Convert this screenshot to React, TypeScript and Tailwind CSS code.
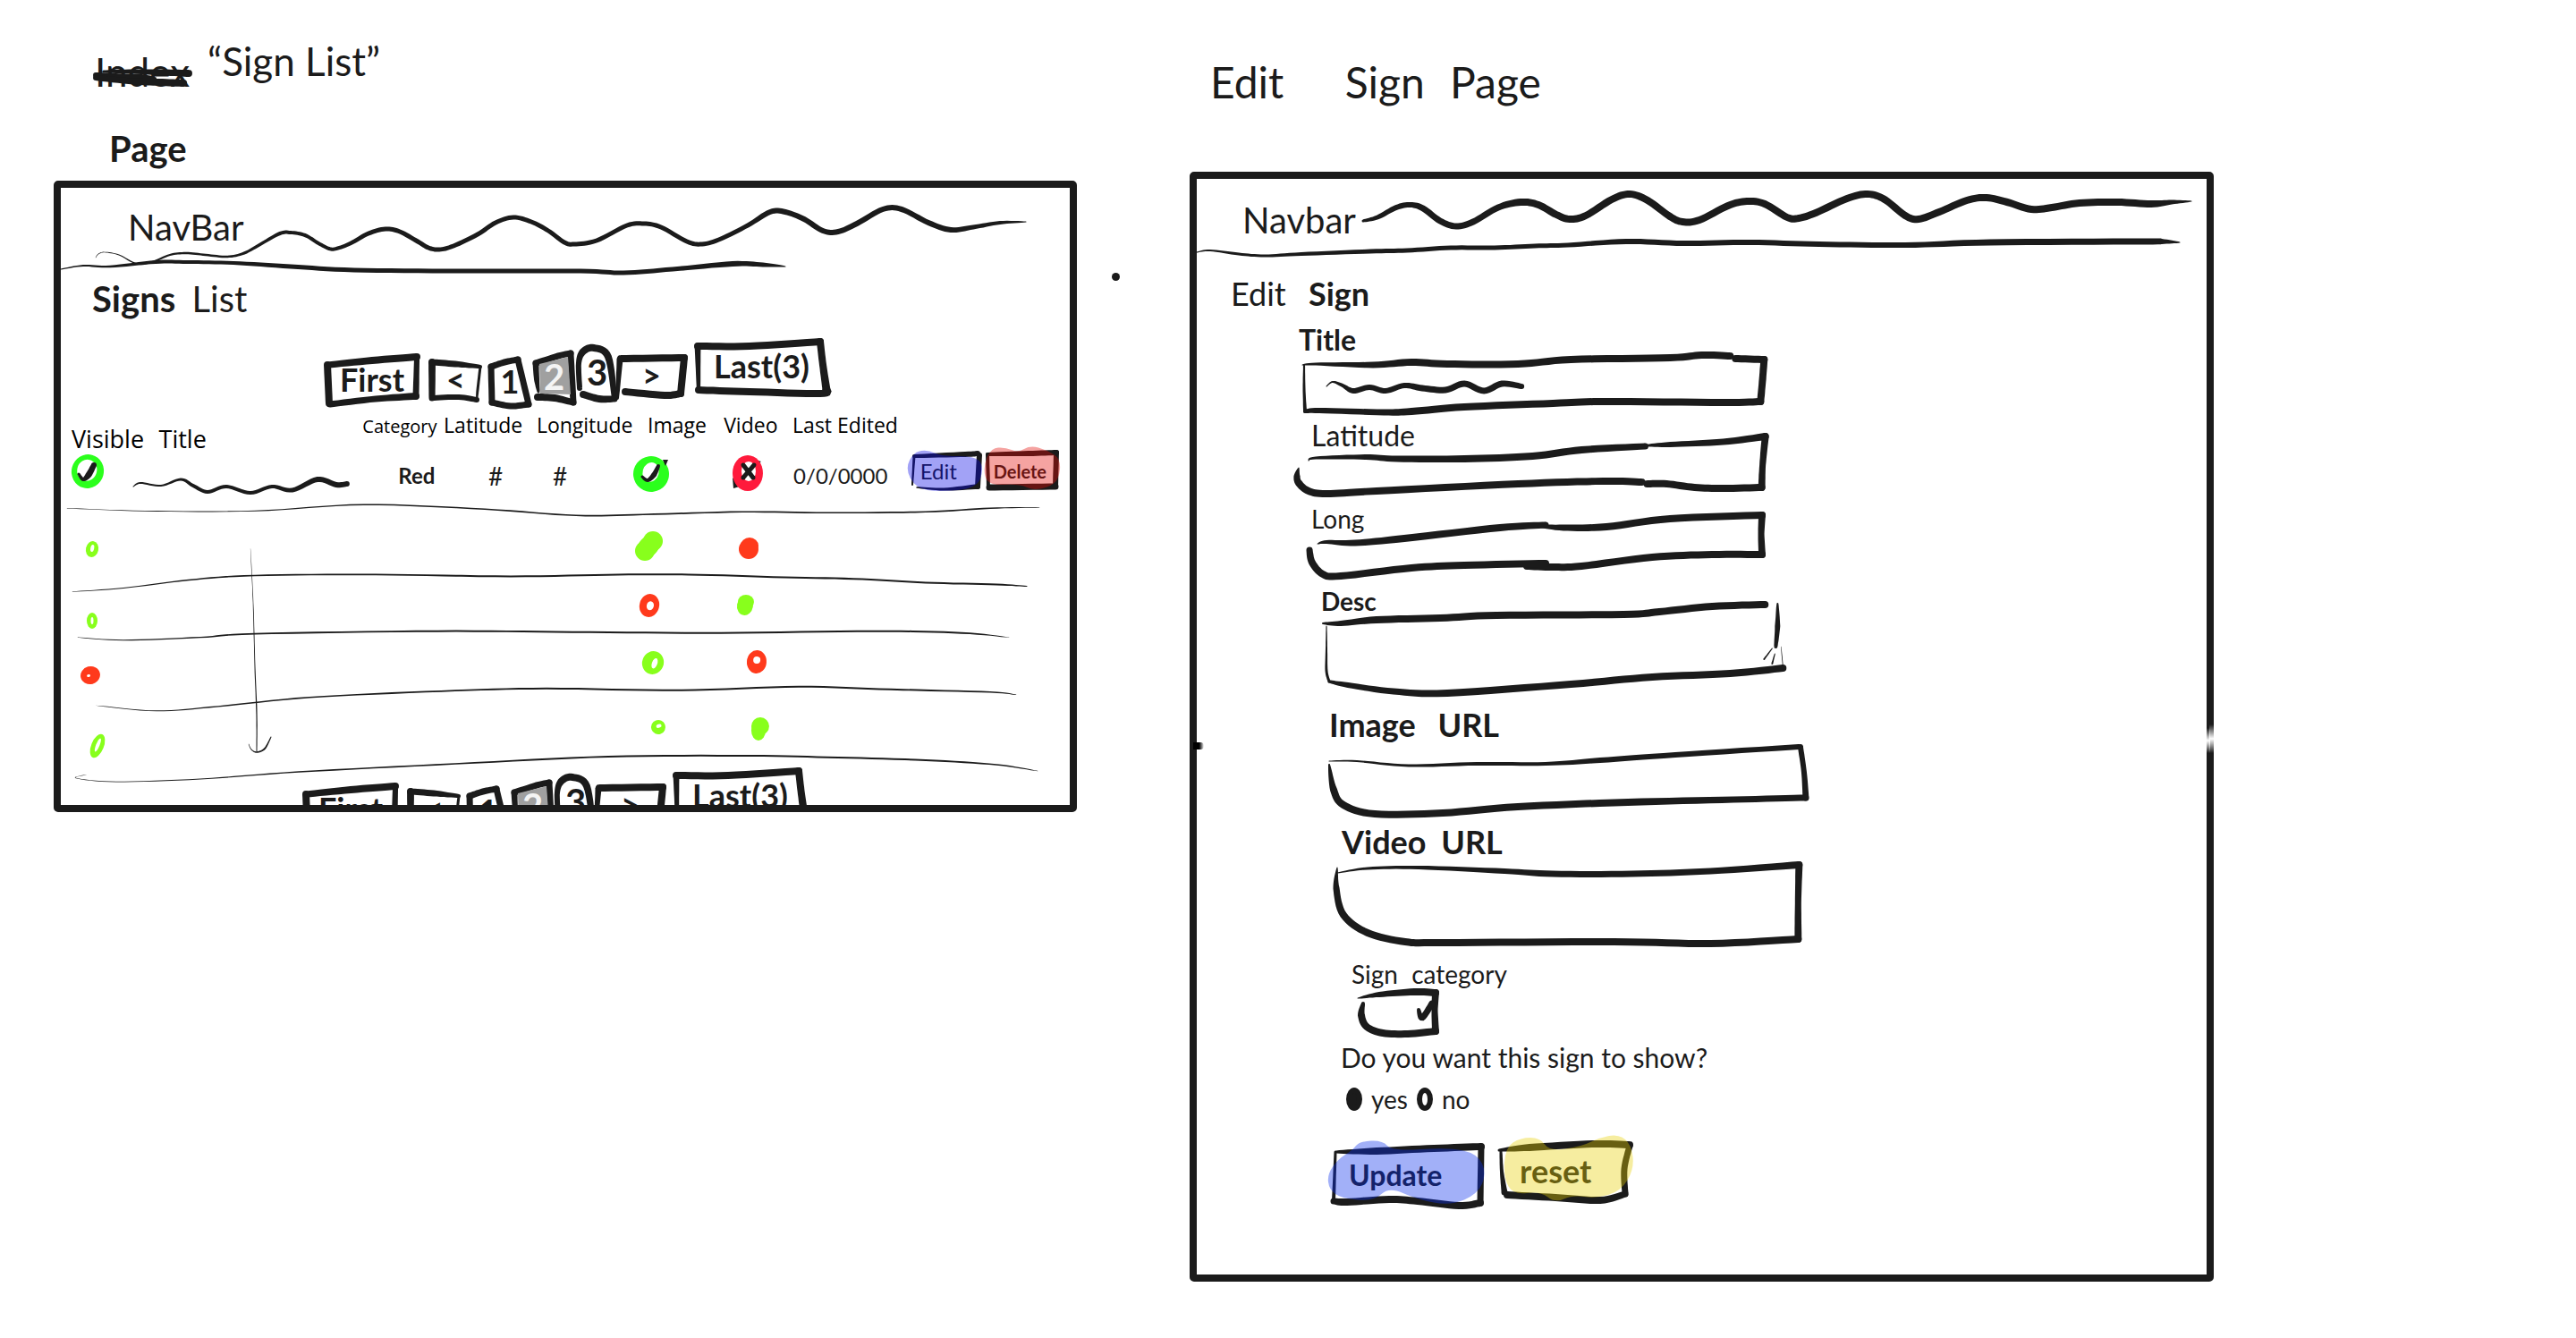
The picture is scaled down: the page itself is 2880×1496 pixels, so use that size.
import React from "react";

const INK = "#1b1b1b";

type Point = [number, number, number];

/* Builds the outline of a pen stroke whose points are written "x,y,width". */
function penPath(source: string, extra: number): string {
  const pts = source
    .trim()
    .split(/\s+/)
    .map((p) => p.split(",").map(Number) as Point)
    .map(([x, y, w]) => [x, y, w >= 5 ? w + extra : w] as Point);
  const samples: Point[] = [];
  for (let i = 0; i < pts.length - 1; i++) {
    const a = pts[Math.max(i - 1, 0)];
    const b = pts[i];
    const c = pts[i + 1];
    const d = pts[Math.min(i + 2, pts.length - 1)];
    for (let s = 0; s < 8; s++) {
      const t = s / 8;
      const at = (k: 0 | 1) =>
        0.5 *
        (2 * b[k] +
          (c[k] - a[k]) * t +
          (2 * a[k] - 5 * b[k] + 4 * c[k] - d[k]) * t * t +
          (3 * b[k] - a[k] - 3 * c[k] + d[k]) * t * t * t);
      samples.push([at(0), at(1), b[2] + (c[2] - b[2]) * t]);
    }
  }
  samples.push(pts[pts.length - 1]);
  const left: string[] = [];
  const right: string[] = [];
  samples.forEach((p, i) => {
    const q = samples[Math.max(i - 1, 0)];
    const r = samples[Math.min(i + 1, samples.length - 1)];
    const dx = r[0] - q[0];
    const dy = r[1] - q[1];
    const len = Math.hypot(dx, dy) || 1;
    const nx = ((-dy / len) * p[2]) / 2;
    const ny = ((dx / len) * p[2]) / 2;
    left.push(`${(p[0] + nx).toFixed(1)} ${(p[1] + ny).toFixed(1)}`);
    right.unshift(`${(p[0] - nx).toFixed(1)} ${(p[1] - ny).toFixed(1)}`);
  });
  const cap = (p: Point) => {
    const r = p[2] / 2;
    return `M${p[0] - r} ${p[1]}a${r} ${r} 0 1 0 ${p[2]} 0a${r} ${r} 0 1 0 ${-p[2]} 0Z`;
  };
  return `M${left.join("L")}L${right.join("L")}Z${cap(pts[0])}${cap(pts[pts.length - 1])}`;
}

function Pen({ pts, extra = 0 }: { pts: string; extra?: number }) {
  return <path d={penPath(pts, extra)} fill={INK} fillRule="nonzero" />;
}

/* Smooth closed highlighter patch. */
function Marker({ pts, color }: { pts: string; color: string }) {
  const p = pts.split(" ").map((s) => s.split(",").map(Number));
  const mid = (a: number[], b: number[]) => `${(a[0] + b[0]) / 2} ${(a[1] + b[1]) / 2}`;
  const d = p.map((c, i) => `Q${c[0]} ${c[1]} ${mid(c, p[(i + 1) % p.length])}`).join("");
  return <path d={`M${mid(p[p.length - 1], p[0])}${d}Z`} fill={color} />;
}

function Sketch({
  box,
  strokes = [],
  extra = 0,
  children,
}: {
  box: string;
  strokes?: string[];
  extra?: number;
  children?: React.ReactNode;
}) {
  return (
    <svg
      aria-hidden="true"
      viewBox={box}
      preserveAspectRatio="none"
      className="pointer-events-none absolute inset-0 h-full w-full overflow-visible"
    >
      {strokes.map((s) => (
        <Pen key={s} pts={s} extra={extra} />
      ))}
      {children}
    </svg>
  );
}

const pages = [
  {
    label: "First",
    box: "362 397 108 58",
    cls: "mt-[18px] h-[58px] w-[108px] text-[36px]",
    strokes: [
      "367,408,6 416,403,7 466,399,7",
      "466,400,5 465,443,6",
      "465,443,7 420,446,6 369,452,6",
      "366,408,7 368,451,7",
    ],
  },
  {
    label: "<",
    box: "480 402 59 48",
    cls: "mt-[23px] ml-[10px] h-[48px] w-[59px] text-[36px]",
    strokes: [
      "483,405,7 483,445,6",
      "483,405,6 509,407,6 537,410,4",
      "537,410,3 534,436,3 533,448,2",
      "483,445,5 513,444,5 533,447,5",
    ],
  },
  {
    label: "1",
    box: "546 400 48 56",
    cls: "mt-[21px] ml-[7px] h-[56px] w-[48px] text-[36px]",
    strokes: [
      "549,410,6 550,450,6",
      "549,410,6 564,405,6 579,402,6",
      "579,402,6 591,452,6",
      "550,450,6 571,454,6 591,452,6",
    ],
  },
  {
    label: "2",
    box: "596 393 47 59",
    cls: "mt-[14px] ml-[2px] h-[59px] w-[47px] text-[40px] text-[#f4f4f4]",
    current: true,
    strokes: [
      "599,406,6 600,424,5 602,438,3",
      "599,406,6 624,398,6 638,395,6",
      "638,395,6 641,450,6",
      "641,450,6 620,445,7 601,444,7",
    ],
  },
  {
    label: "3",
    box: "644 387 47 61",
    cls: "mt-[8px] ml-px h-[61px] w-[47px] text-[40px]",
    strokes: [
      "648,434,5 647,406,5 652,393,7 664,389,7 680,399,7 687,445,5",
      "687,446,6 670,446,7 652,441,7",
    ],
  },
  {
    label: ">",
    box: "690 396 77 49",
    cls: "mt-[17px] -ml-px h-[49px] w-[77px] text-[36px]",
    strokes: ["690,445,4 693,402,6", "694,401,7 765,400,7", "765,400,7 761,440,7", "761,440,7 743,442,7 699,438,7"],
  },
  {
    label: "Last(3)",
    box: "776 379 151 64",
    cls: "ml-[9px] h-[64px] w-[151px] text-[36px]",
    strokes: [
      "780,387,7 838,387,7 917,382,7",
      "917,382,7 920,408,7 924,436,8",
      "924,436,8 917,440,7 838,438,7 781,436,7",
      "780,387,6 781,436,4",
    ],
  },
];

function Pagination({ className, label }: { className: string; label: string }) {
  return (
    <nav aria-label={label} className={`flex h-[78px] items-start font-bold ${className}`}>
      {pages.map((p) => (
        <button
          key={p.label}
          type="button"
          aria-current={p.current ? "page" : undefined}
          className={`relative flex shrink-0 items-center justify-center pb-1 leading-none ${p.cls}`}
        >
          <Sketch box={p.box} strokes={p.strokes} extra={1}>
            {p.current && <path d="M603 407L635 399L638 441L604 440Z" fill="#a0a0a0" />}
          </Sketch>
          <span className="relative">{p.label}</span>
        </button>
      ))}
    </nav>
  );
}

const LIME = "#88ff1c";
const RED = "#ff3a1c";

type Mark = { cx: number; cy: number; rx: number; ry: number; fill: string; tilt?: number; hole?: [number, number, number, number] };

function Status({ x, w, y, marks, label, children }: { x: number; w: number; y: number; marks: Mark[]; label: string; children?: React.ReactNode }) {
  return (
    <svg
      role="img"
      aria-label={label}
      viewBox={`${x} ${y} ${w} 60`}
      preserveAspectRatio="xMinYMid"
      className="block h-[60px] w-full overflow-visible"
    >
      {marks.map((m, i) => (
        <g key={i} transform={`rotate(${m.tilt ?? 0} ${m.cx} ${m.cy})`}>
          <ellipse cx={m.cx} cy={m.cy} rx={m.rx} ry={m.ry} fill={m.fill} />
          {m.hole && <ellipse cx={m.hole[0]} cy={m.hole[1]} rx={m.hole[2]} ry={m.hole[3]} fill="#fff" />}
        </g>
      ))}
      {children}
    </svg>
  );
}

const VIS = { x: 68, w: 101 };
const IMG = { x: 720, w: 81 };
const VID = { x: 801, w: 79 };

const rows: { h: string; y: number; vis: Mark; img: Mark[]; vid: Mark[]; on: [boolean, boolean, boolean] }[] = [
  {
    h: "h-[75px]",
    y: 577,
    on: [true, true, false],
    vis: { cx: 103, cy: 612, rx: 7, ry: 9, fill: LIME, tilt: 12, hole: [103, 611, 2, 4] },
    img: [
      { cx: 721, cy: 614, rx: 11, ry: 11, fill: LIME },
      { cx: 725, cy: 609, rx: 11, ry: 15, fill: LIME, tilt: 42 },
      { cx: 730, cy: 603, rx: 11, ry: 11, fill: LIME },
    ],
    vid: [
      { cx: 838, cy: 608, rx: 10, ry: 9, fill: RED },
      { cx: 837, cy: 612, rx: 11, ry: 11, fill: RED },
    ],
  },
  {
    h: "h-[63px]",
    y: 646,
    on: [true, false, true],
    vis: { cx: 103, cy: 692, rx: 6, ry: 9, fill: LIME, hole: [103, 692, 1.5, 4] },
    img: [{ cx: 726, cy: 675, rx: 11, ry: 13, fill: RED, tilt: 15, hole: [727, 675, 4, 5] }],
    vid: [
      { cx: 834, cy: 671, rx: 9, ry: 8, fill: LIME },
      { cx: 833, cy: 675, rx: 9, ry: 11, fill: LIME, tilt: 10 },
    ],
  },
  {
    h: "h-[64px]",
    y: 710,
    on: [false, true, false],
    vis: { cx: 101, cy: 754, rx: 11, ry: 10, fill: RED, tilt: -15, hole: [99, 754, 2, 1.5] },
    img: [{ cx: 730, cy: 740, rx: 12, ry: 13, fill: LIME, tilt: 20, hole: [732, 740, 3, 6] }],
    vid: [{ cx: 846, cy: 739, rx: 11, ry: 13, fill: RED, tilt: 5, hole: [846, 737, 4, 4] }],
  },
  {
    h: "h-[76px]",
    y: 780,
    on: [true, true, true],
    vis: { cx: 109, cy: 833, rx: 7, ry: 14, fill: LIME, tilt: 22, hole: [109, 832, 2, 8] },
    img: [{ cx: 736, cy: 812, rx: 8, ry: 8, fill: LIME, tilt: -20, hole: [737, 811, 3, 2] }],
    vid: [
      { cx: 850, cy: 811, rx: 10, ry: 10, fill: LIME },
      { cx: 848, cy: 816, rx: 8, ry: 11, fill: LIME },
    ],
  },
];

const tableRules = [
  "75,568,0.5 162,571,0.8 285,571,1 407,564,1.5 542,569,1.5 644,576,1.7 719,575,1.7 830,572,1.7 925,573,1.7 1035,572,1.7 1107,568,1.5 1162,567,0.5",
  "81,661,0.5 138,657,1 211,648,1.5 285,643,1.7 420,642,1.8 571,644,2 691,642,2 770,642,2 877,645,2 964,647,2 1035,651,2 1114,653,2 1148,655,1",
  "87,712,0.5 138,715,1 224,712,1.5 285,708,1.7 489,705,2 640,706,2 806,707,2 976,705,2 1075,707,2 1128,712,0.5",
  "108,788,0.5 175,794,1 244,789,1.5 346,779,1.6 493,772,1.8 611,769,2 759,771,2 893,767,2 996,770,2 1107,773,1.7 1136,776,0.5",
  "97,865,0.3 85,869,0.5 130,873,0.8 224,870,1 334,862,1.5 509,853,1.7 680,845,2 838,844,2 937,846,2 1035,849,2 1114,854,1.7 1160,861,0.5",
  "280,613,0.3 283,673,0.7 285,745,1 287,798,1.3 287,839,1",
  "278,831,0.5 281,837,1 287,840,1.5 296,836,2 303,823,1",
];

function SignTable() {
  return (
    <div className="relative mt-[6px]">
      <table className="w-full table-fixed border-collapse text-left">
        <colgroup>
          <col className="w-[9%]" />
          <col className="w-[20.2%]" />
          <col className="w-[8.4%]" />
          <col className="w-[9.2%]" />
          <col className="w-[11%]" />
          <col className="w-[7.2%]" />
          <col className="w-[7%]" />
          <col className="w-[11.4%]" />
          <col />
        </colgroup>
        <thead>
          <tr className="h-[45px] font-['Open_Sans',sans-serif] text-[23px] leading-[24px] whitespace-nowrap text-black [&>th]:p-0 [&>th]:align-top [&>th]:font-normal">
            <th scope="col">
              <span className="block pt-[10px] pl-3 text-[27px] leading-[36px]">Visible</span>
            </th>
            <th scope="col">
              <span className="block pt-[10px] pl-2 text-[27px] leading-[36px]">Title</span>
            </th>
            <th scope="col">
              <span className="pl-2 text-[20px]">Category</span>
            </th>
            <th scope="col">
              <span className="pl-1">Latitude</span>
            </th>
            <th scope="col">
              <span className="pl-1">Longitude</span>
            </th>
            <th scope="col">
              <span className="pl-1">Image</span>
            </th>
            <th scope="col">
              <span className="pl-2">Video</span>
            </th>
            <th scope="col">
              <span className="pl-[6px]">Last Edited</span>
            </th>
            <th scope="col" aria-label="Actions" />
          </tr>
        </thead>
        <tbody className="[&_td]:p-0">
          <tr className="h-[62px] text-[24px] leading-[28px]">
            <td>
              <Status
                {...VIS}
                y={509}
                label="Visible"
                marks={[{ cx: 98, cy: 526, rx: 18, ry: 19, fill: "#2bff1c", tilt: 15, hole: [97, 525, 11, 12] }]}
              >
                <Pen pts="88,529,3 93,535,4 99,530,7 105,519,6" />
              </Status>
            </td>
            <td className="relative">
              <Sketch
                box="169 508 228 62"
                strokes={[
                  "148,543,1 156,539,2 179,542,2 201,535,3 215,542,4 231,549,4 252,543,4 279,550,4 303,543,4 326,547,5 354,535,6 375,541,6 387,540,6",
                ]}
              />
            </td>
            <td>
              <span className="block pb-4 pl-[48px] font-bold">Red</span>
            </td>
            <td>
              <span className="block pb-4 pl-[54px] text-[28px]">#</span>
            </td>
            <td>
              <span className="block pb-4 pl-[22px] text-[28px]">#</span>
            </td>
            <td>
              <Status
                {...IMG}
                y={509}
                label="Has image"
                marks={[{ cx: 728, cy: 529, rx: 20, ry: 20, fill: "#2bff1c", tilt: 15, hole: [727, 527, 9, 11] }]}
              >
                <Pen pts="718,532,3 724,536,4 731,530,6 736,520,4" />
                <path d="M741 513L747 513L744 520Z" fill={INK} />
              </Status>
            </td>
            <td>
              <Status {...VID} y={509} label="No video" marks={[]}>
                <path d="M826 513L833 513L829 518ZM844 513L851 515L846 519ZM819 533L820 545L827 543Z" fill={INK} />
                <ellipse cx="836" cy="528" rx="17" ry="20" fill="#ff1a3c" />
                <ellipse cx="837" cy="526" rx="8" ry="11" fill="#fff" />
                <Pen pts="831,519,5 842,533,5" />
                <Pen pts="843,519,5 831,533,5" />
              </Status>
            </td>
            <td>
              <span className="block pb-4 pl-[7px]">0/0/0000</span>
            </td>
            <td className="align-top">
              <div className="-mt-[5px] flex gap-[5px] pl-[11px]">
                <button type="button" className="relative h-[46px] w-[77px] pl-[9px] text-left text-[24px]">
                  <Sketch
                    box="1020 503 77 46"
                    extra={1}
                    strokes={[
                      "1022,509,4 1079,507,5 1093,506,5",
                      "1095,508,5 1093,543,5",
                      "1093,543,5 1055,546,3 1025,544,1.5",
                      "1022,509,3 1020,541,2",
                    ]}
                  />
                  Edit
                  <Sketch box="1020 503 77 46">
                    <Marker
                      pts="1012,523 1022,504 1038,502 1052,509 1092,509 1100,523 1092,545 1050,549 1024,545"
                      color="rgba(10,10,232,0.38)"
                    />
                  </Sketch>
                </button>
                <button type="button" className="relative h-[46px] w-[81px] pl-[9px] text-left text-[20px] font-bold">
                  <Sketch
                    box="1102 503 81 46"
                    extra={1}
                    strokes={[
                      "1104,507,4 1150,506,5 1181,505,5",
                      "1181,505,5 1180,543,5",
                      "1180,543,6 1106,544,6",
                      "1104,507,4 1105,544,4",
                    ]}
                  />
                  Delete
                  <Sketch box="1102 503 81 46">
                    <Marker
                      pts="1099,521 1108,500 1124,499 1138,505 1152,497 1170,502 1186,512 1184,535 1172,544 1154,547 1140,540 1104,542"
                      color="rgba(228,12,8,0.38)"
                    />
                  </Sketch>
                </button>
              </div>
            </td>
          </tr>
          {rows.map((r) => (
            <tr key={r.y} className={r.h}>
              <td>
                <Status {...VIS} y={r.y} label={r.on[0] ? "Visible" : "Hidden"} marks={[r.vis]} />
              </td>
              <td colSpan={4} />
              <td>
                <Status {...IMG} y={r.y} label={r.on[1] ? "Has image" : "No image"} marks={r.img} />
              </td>
              <td>
                <Status {...VID} y={r.y} label={r.on[2] ? "Has video" : "No video"} marks={r.vid} />
              </td>
              <td colSpan={2} />
            </tr>
          ))}
        </tbody>
      </table>
      <Sketch box="68 463 1128 385" strokes={tableRules} />
    </div>
  );
}

function SignListPage() {
  return (
    <section>
      <header className="h-[202px] pt-[42px]">
        <h1>
          <span className="flex items-start gap-5 pl-[46px] text-[44px] leading-[52px]">
            <s className="relative mt-3 no-underline">
              Index
              <Sketch
                box="106 54 109 52"
                strokes={[
                  "116,80,3 150,80,5 185,81,7 214,82,8",
                  "107,84,6 130,86,8 160,87,8 175,88,4",
                  "107,87,6 150,91,7 180,92,8 208,93,8",
                ]}
              />
            </s>
            <span>&ldquo;Sign List&rdquo;</span>
          </span>
          <span className="mt-9 block pl-[62px] text-[40px] leading-[48px] font-bold">Page</span>
        </h1>
      </header>
      <div className="h-[706px] overflow-hidden rounded-[5px] border-8 border-[#1b1b1b]">
        <nav className="relative h-[100px] pt-5 pl-[75px] text-[40px] leading-[48px]" aria-label="Sign list navigation">
          <a href="#home">NavBar</a>
          <Sketch
            box="68 210 1128 100"
            strokes={[
              "107,288,0.5 110,284,0.7 117,282,0.7 133,285,1 153,295,1.5 170,293,2 190,285,2.3 208,283,2.5 230,285,2.5 254,287,2.5 273,283,3 293,272,3.5 313,261,4 325,260,4 341,263,4 356,272,4 368,278,4 376,278,4 392,272,4.5 412,261,5 431,256,5 447,259,5 467,270,5 479,277,5 491,279,5 507,275,5 534,262,5 554,249,5 574,243,5 594,248,5 613,258,5 631,271,5 642,273,5 667,269,5 701,252,5 720,250,5 739,254,5 768,270,5 785,273,5 806,267,5 836,252,5 861,237,6 878,237,6 899,245,6 920,258,6 937,259,6 958,250,6 987,234,6 1008,234,6 1038,249,6 1063,257,6 1088,254,5 1118,249,4 1147,248,1",
              "68,301,1 93,297,2 123,298,2.5 174,293,4 210,293,4 261,294,4 325,298,5 396,302,5 515,303,5 649,303,5 697,305,5 752,301,5 819,295,6 853,296,5 878,298,1",
            ]}
          />
        </nav>
        <h2 className="pl-[35px] text-[40px] leading-[48px]">
          <span className="mr-2 font-bold">Signs</span> List
        </h2>
        <Pagination className="mt-[21px] pl-[294px]" label="Pages, top" />
        <SignTable />
        <Pagination className="mt-[10px] pl-[270px]" label="Pages, bottom" />
      </div>
    </section>
  );
}

type FieldProps = {
  id: string;
  label: React.ReactNode;
  labelClass: string;
  boxClass: string;
  box: string;
  strokes: string[];
  area?: boolean;
};

function Field({ id, label, labelClass, boxClass, box, strokes, area }: FieldProps) {
  return (
    <div>
      <label htmlFor={id} className={`block w-fit ${labelClass}`}>
        {label}
      </label>
      <div className={`relative ${boxClass}`}>
        <Sketch box={box} strokes={strokes} extra={1} />
        {area ? (
          <textarea id={id} className="relative block h-full w-full resize-none bg-transparent px-6 text-[28px] outline-none" />
        ) : (
          <input id={id} type="text" className="relative block h-full w-full bg-transparent px-6 text-[28px] outline-none" />
        )}
      </div>
    </div>
  );
}

const fields: FieldProps[] = [
  {
    id: "title",
    label: "Title",
    labelClass: "ml-[114px] text-[32px] leading-[32px] font-bold",
    boxClass: "ml-[118px] h-[66px] w-[46%]",
    box: "1456 396 519 66",
    strokes: [
      "1456,408,1 1471,407,3 1535,408,6 1578,405,7 1618,407,7 1697,407,7 1756,402,7 1867,400,7 1902,397,7 1934,398,7",
      "1940,401,7 1972,402,7",
      "1972,402,7 1970,427,7 1968,449,7",
      "1968,449,7 1926,450,7 1792,449,7 1736,451,7 1637,455,7 1578,460,7 1547,461,6 1475,459,5 1459,460,4",
      "1459,460,4 1458,434,3 1458,408,2",
      "1483,432,1 1490,427,2 1501,431,4 1513,437,5 1531,433,5 1549,437,5 1570,431,5 1590,434,6 1616,436,6 1637,429,6 1659,437,6 1679,429,6 1701,432,5",
    ],
  },
  {
    id: "latitude",
    label: "Latitude",
    labelClass: "mt-[9px] ml-[128px] text-[32px] leading-[32px]",
    boxClass: "ml-[108px] h-[54px] w-[47%] -mt-[2px]",
    box: "1446 501 530 54",
    strokes: [
      "1463,515,1 1471,512,3 1527,511,5 1562,513,6 1637,513,7 1713,510,7 1768,503,7 1839,499,6",
      "1839,498,2 1867,497,5 1926,494,6 1973,488,7",
      "1973,488,7 1970,520,6 1969,545,7",
      "1969,545,7 1926,546,7 1894,545,7 1863,541,7 1841,541,7",
      "1835,539,7 1792,538,7 1697,541,7 1539,549,7 1483,552,7 1463,549,7 1452,540,7 1450,532,6 1452,523,1",
    ],
  },
  {
    id: "long",
    label: "Long",
    labelClass: "mt-[9px] ml-[128px] text-[28px] leading-[32px]",
    boxClass: "ml-[124px] h-[52px] w-[45%]",
    box: "1462 596 508 52",
    strokes: [
      "1473,608,1 1483,606,4 1515,607,6 1570,602,7 1677,590,7 1728,587,6",
      "1720,588,3 1748,590,6 1796,589,7 1867,580,7 1970,576,7",
      "1970,576,7 1969,597,6 1970,620,7",
      "1970,620,7 1914,620,7 1847,623,7 1768,633,7 1736,634,7 1707,633,7",
      "1728,630,7 1637,632,7 1578,635,7 1499,644,7 1479,642,7 1467,629,7 1464,615,6",
    ],
  },
  {
    id: "desc",
    label: "Desc",
    labelClass: "mt-2 ml-[139px] text-[28px] leading-[32px] font-bold",
    boxClass: "ml-[141px] h-[91px] w-[46%]",
    box: "1479 688 519 91",
    area: true,
    strokes: [
      "1479,697,2 1499,697,5 1539,693,7 1610,691,7 1673,688,7 1815,687,7 1855,684,7 1914,678,7 1973,676,7",
      "1987,675,2 1987,700,5 1985,723,4",
      "1991,723,0.5 1993,745,1",
      "1993,747,7 1934,753,7 1847,757,7 1756,765,7 1618,775,7 1558,773,6 1507,766,5 1486,762,3",
      "1486,762,3 1483,750,3 1483,725,2 1483,700,1",
      "1981,725,1 1972,737,2",
      "1984,731,1 1981,742,2",
    ],
  },
  {
    id: "image-url",
    label: (
      <>
        <span className="mr-4">Image</span> URL
      </>
    ),
    labelClass: "mt-[11px] ml-[148px] text-[36px] leading-[40px] font-bold",
    boxClass: "ml-[146px] h-[83px] w-[48%]",
    box: "1484 830 542 83",
    strokes: [
      "1486,851,1 1517,851,2 1575,856,3 1651,854,4 1728,854,4 1789,850,5 1873,844,5 2011,835,5",
      "2013,835,5 2017,863,5 2019,892,6",
      "2019,892,6 1938,894,6 1820,897,7 1697,902,7 1613,909,7 1537,910,7 1502,900,7 1491,883,7 1486,855,2",
    ],
  },
  {
    id: "video-url",
    label: (
      <>
        <span className="mr-2">Video</span> URL
      </>
    ),
    labelClass: "mt-2 ml-[162px] text-[36px] leading-[40px] font-bold",
    boxClass: "ml-[153px] h-[97px] w-[46%]",
    box: "1491 961 519 97",
    strokes: [
      "1495,976,1 1529,971,3 1586,970,4 1682,974,5 1736,977,6 1824,977,6 1912,974,6 2011,967,7",
      "2011,967,7 2010,1010,6 2010,1050,7",
      "2010,1050,7 1912,1055,7 1804,1053,7 1613,1054,7 1571,1053,7 1529,1043,7 1502,1023,7 1494,993,6 1495,970,1",
    ],
  },
];

function EditSignPage() {
  return (
    <section>
      <header className="h-[192px] pt-[63px] pl-[23px]">
        <h1 className="text-[48px] leading-[58px]">
          <span className="mr-14">Edit</span> <span className="mr-4">Sign</span> Page
        </h1>
      </header>
      <div className="relative h-[1241px] rounded-[5px] border-8 border-[#1b1b1b]">
        {/* Seam where the outline was drawn in two parts. */}
        <span className="absolute top-[630px] -left-1 h-2 w-3 rounded-r bg-gradient-to-r from-black via-black to-white" />
        <span className="absolute top-[610px] -right-[10px] h-8 w-[7px] bg-gradient-to-b from-transparent via-white to-transparent" />
        <span className="absolute top-[614px] -right-1 h-7 w-1 bg-gradient-to-b from-transparent via-white to-transparent" />
        <nav className="relative h-[90px] pt-[22px] pl-[51px] text-[40px] leading-[48px]" aria-label="Edit page navigation">
          <a href="#home">Navbar</a>
          <Sketch
            box="1338 200 1129 90"
            strokes={[
              "1524,247,3 1540,243,5 1561,232,6 1577,229,6 1591,233,7 1610,247,7 1628,253,7 1647,248,7 1675,232,7 1700,226,8 1720,229,8 1740,240,8 1755,245,8 1773,241,8 1802,223,8 1822,217,8 1842,224,8 1867,242,8 1881,248,8 1900,246,8 1932,230,8 1953,225,8 1973,228,8 1998,243,8 2011,244,8 2030,238,8 2065,222,8 2088,217,8 2107,223,8 2130,241,8 2145,245,8 2168,237,8 2199,224,8 2221,221,8 2244,226,8 2271,234,8 2294,232,8 2325,227,8 2367,226,8 2405,228,8 2428,226,5 2450,225,1",
              "1338,282,1 1353,280,2 1385,284,3 1414,286,3 1455,284,4 1532,281,5 1573,280,5 1622,277,5 1671,277,5 1716,275,5 1753,274,5 1818,270,6 1883,272,6 1957,271,6 2034,273,6 2130,274,6 2225,271,7 2397,270,7 2417,270,6 2437,271,1",
            ]}
          />
        </nav>
        <h2 className="mt-4 pl-[38px] text-[36px] leading-[44px]">
          <span className="mr-4">Edit</span> <span className="font-bold">Sign</span>
        </h2>
        <form className="mt-[14px]" onSubmit={(e) => e.preventDefault()}>
          {fields.map((f) => (
            <Field key={f.id} {...f} />
          ))}
          <label htmlFor="category" className="mt-[15px] ml-[173px] block w-fit text-[28px] leading-[32px]">
            <span className="mr-2">Sign</span> category
          </label>
          <div className="relative ml-[180px] h-[55px] w-[91px]">
            <Sketch
              box="1518 1105 91 55"
              extra={1}
              strokes={[
                "1518,1116,1 1542,1112,5 1581,1109,7 1605,1110,7",
                "1605,1110,7 1604,1130,6 1605,1153,7",
                "1605,1153,7 1574,1156,7 1546,1155,7 1528,1148,7 1522,1135,7 1524,1122,4",
                "1586,1129,4 1590,1138,6 1601,1122,6",
              ]}
            />
            <select id="category" className="relative block h-full w-full appearance-none bg-transparent px-3 text-[20px] outline-none">
              <option aria-label="No category" />
            </select>
          </div>
          <fieldset className="mt-[6px] text-[28px] leading-[32px]">
            <legend className="pl-[161px] text-[30px]">Do you want this sign to show?</legend>
            <div className="mt-[15px] flex items-center gap-[10px] pl-[167px]">
              <input
                id="show-yes"
                type="radio"
                name="show"
                defaultChecked
                className="h-[26px] w-[18px] appearance-none rounded-[50%] border-[6px] border-[#1b1b1b] checked:bg-[#1b1b1b]"
              />
              <label htmlFor="show-yes">yes</label>
              <input
                id="show-no"
                type="radio"
                name="show"
                className="h-[26px] w-[18px] appearance-none rounded-[50%] border-[6px] border-[#1b1b1b] checked:bg-[#1b1b1b]"
              />
              <label htmlFor="show-no">no</label>
            </div>
          </fieldset>
          <div className="mt-[31px] flex gap-[18px] pl-[150px] font-bold">
            <button type="submit" className="relative h-[76px] w-[170px] pl-5 text-left text-[32px]">
              <Sketch
                box="1488 1276 170 76"
                extra={1}
                strokes={[
                  "1494,1288,3 1539,1287,7 1603,1284,7 1656,1282,7",
                  "1656,1282,6 1655,1345,6",
                  "1655,1345,7 1631,1348,7 1585,1343,7 1553,1341,7 1506,1344,7 1491,1343,6",
                  "1491,1343,4 1493,1288,3",
                ]}
              />
              Update
              <Sketch box="1488 1276 170 76">
                <Marker
                  pts="1484,1313 1496,1296 1512,1286 1520,1276 1546,1275 1556,1287 1620,1283 1652,1290 1662,1312 1652,1335 1622,1348 1584,1341 1553,1327 1536,1343 1500,1340 1486,1330"
                  color="rgba(10,47,237,0.38)"
                />
              </Sketch>
            </button>
            <button type="reset" className="relative h-[76px] w-[149px] pb-[10px] pl-[23px] text-left text-[36px]">
              <Sketch
                box="1676 1276 149 76"
                extra={1}
                strokes={[
                  "1676,1286,3 1710,1283,7 1781,1279,7 1822,1280,7",
                  "1822,1281,6 1816,1307,6 1817,1335,6",
                  "1817,1335,6 1789,1342,7 1739,1339,7 1685,1336,7",
                  "1678,1287,3 1679,1310,4 1682,1333,6",
                ]}
              />
              reset
              <Sketch box="1676 1276 149 76">
                <Marker
                  pts="1681,1317 1683,1283 1700,1272 1722,1272 1732,1287 1768,1282 1788,1272 1810,1268 1824,1280 1827,1307 1812,1332 1784,1340 1758,1336 1739,1345 1722,1332 1692,1336"
                  color="rgba(232,208,5,0.38)"
                />
              </Sketch>
            </button>
          </div>
        </form>
      </div>
    </section>
  );
}

export default function App() {
  return (
    <main className="grid min-h-screen grid-cols-[1144fr_126fr_1145fr_405fr] items-start bg-white pl-[60px] font-['Lato','Liberation_Sans',sans-serif] text-[#1b1b1b]">
      <SignListPage />
      <div className="flex justify-center pt-[305px] pr-10" aria-hidden="true">
        <span className="size-[9px] rounded-full bg-[#1b1b1b]" />
      </div>
      <EditSignPage />
    </main>
  );
}
